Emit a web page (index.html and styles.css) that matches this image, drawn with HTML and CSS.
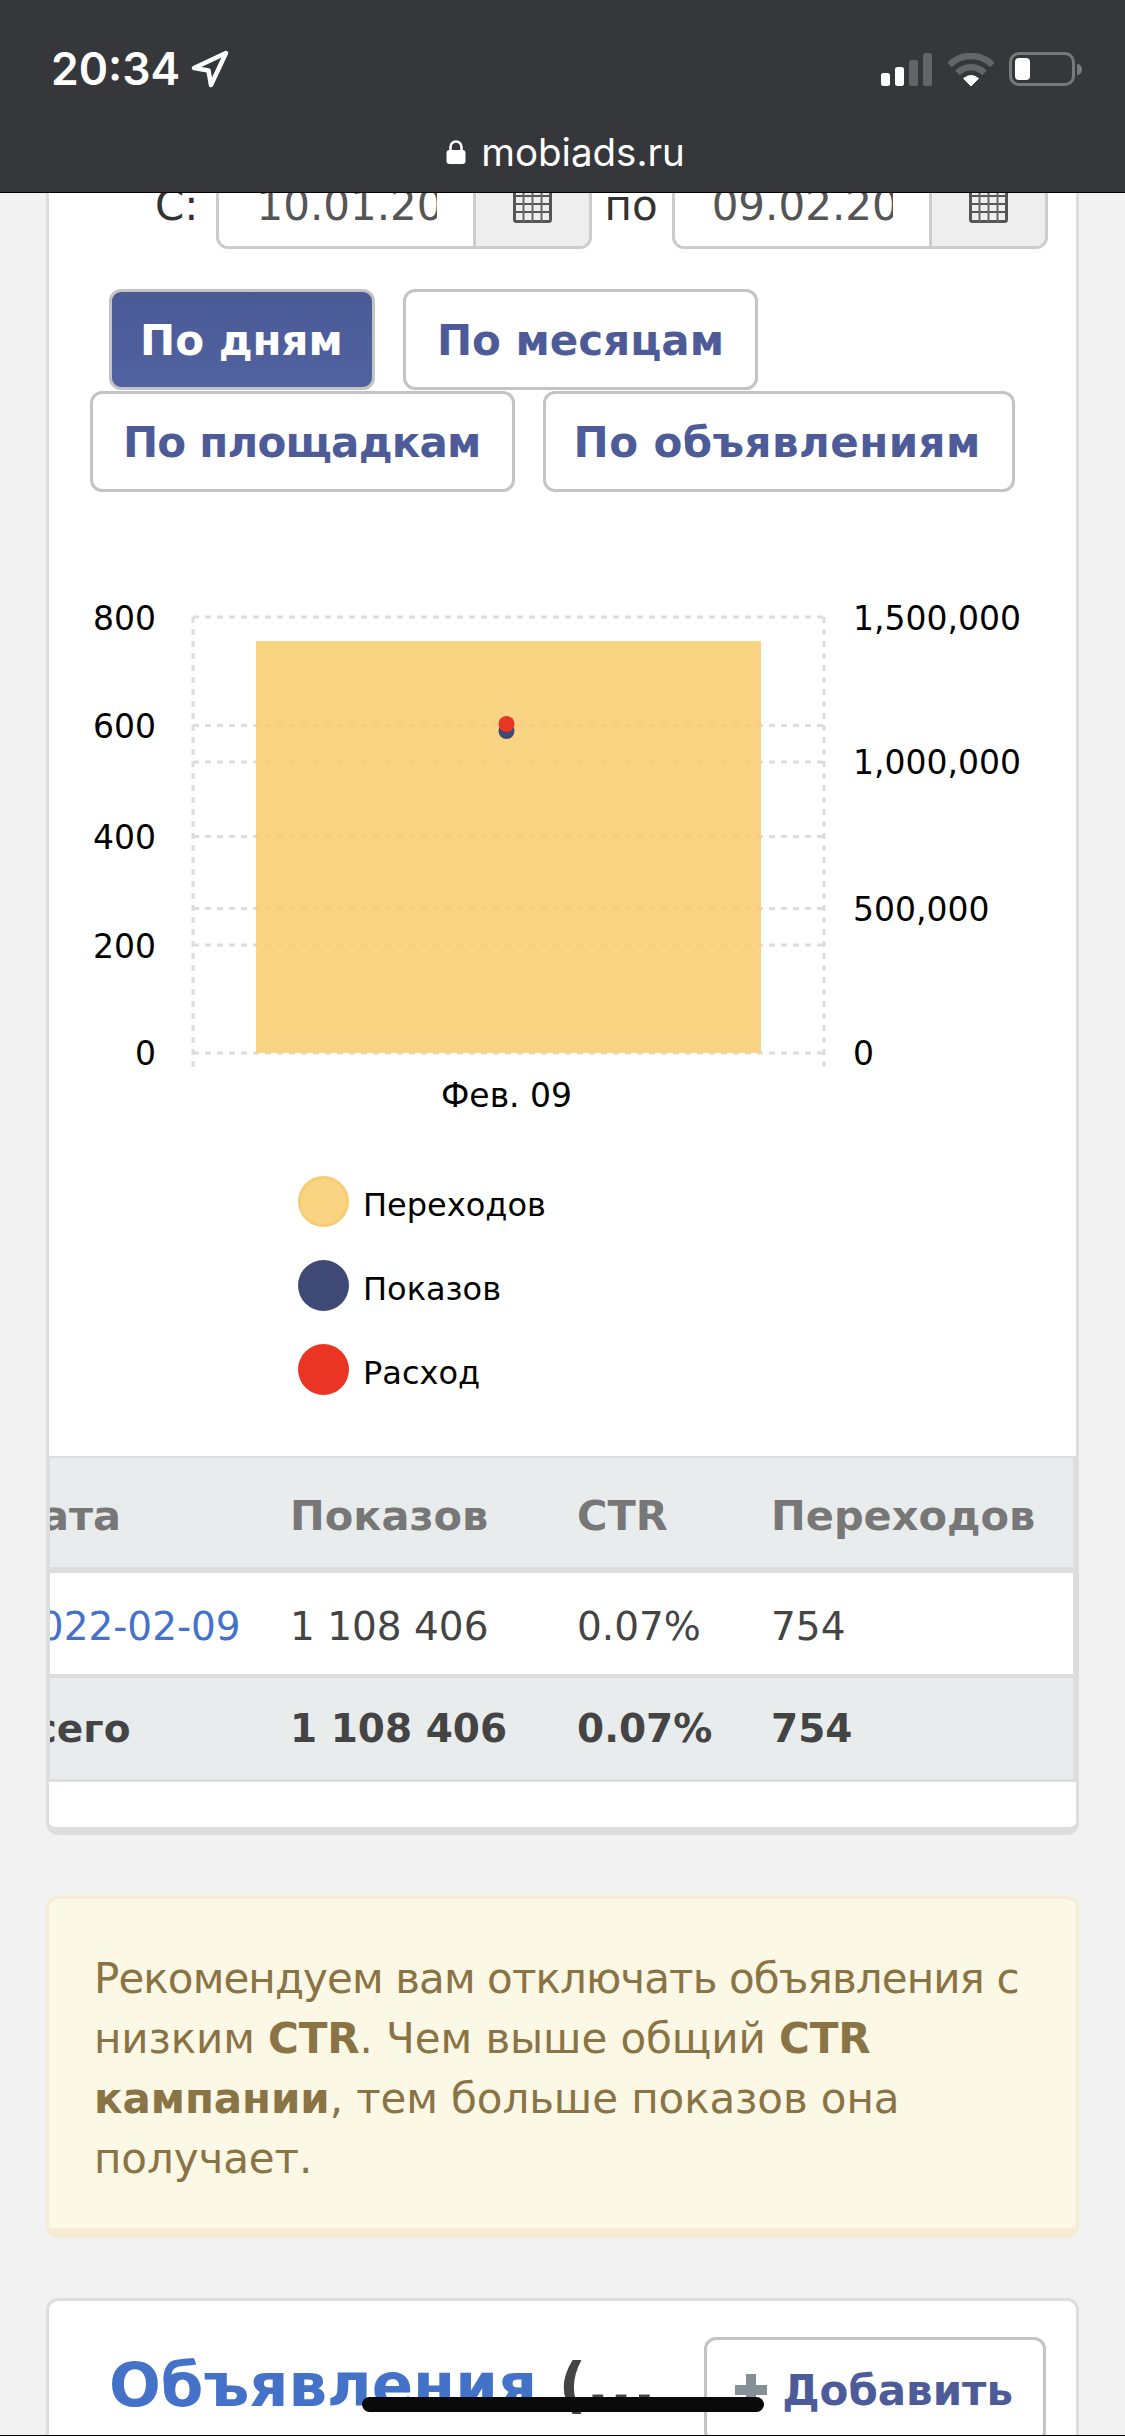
FILE: index.html
```html
<!DOCTYPE html>
<html lang="ru">
<head>
    <meta charset="UTF-8">
    <meta name="viewport" content="width=device-width, initial-scale=1.0">
    <title>mobiads.ru</title>
    <link rel="stylesheet" href="styles.css">
</head>
<body>
    <div class="page">
        <!-- status bar + address -->
        <header class="topbar">
            <div class="status">
                <div class="status-left">
                    <span class="time">20:34</span>
                    <svg class="arrow" width="38" height="38" viewBox="0 0 38 38">
                        <path d="M35 3 L3 18 L17.5 20.5 L20 35 Z" fill="none" stroke="#fff" stroke-width="4.5" stroke-linejoin="round"/>
                    </svg>
                </div>
                <div class="status-right">
                    <svg width="52" height="33" viewBox="0 0 52 33">
                        <rect x="0" y="20" width="9" height="13" rx="2.5" fill="#fff"/>
                        <rect x="14" y="14" width="9" height="19" rx="2.5" fill="#fff"/>
                        <rect x="28" y="7" width="9" height="26" rx="2.5" fill="#636568"/>
                        <rect x="42" y="0" width="9" height="33" rx="2.5" fill="#636568"/>
                    </svg>
                    <svg class="wifi" width="46" height="33" viewBox="0 0 46 33">
                        <path d="M1.5 12 A30 30 0 0 1 44.5 12" fill="none" stroke="#636568" stroke-width="6.5"/>
                        <path d="M9.5 20 A19 19 0 0 1 36.5 20" fill="none" stroke="#636568" stroke-width="6.5"/>
                        <path d="M23 33 L15.5 25.5 Q23 19.5 30.5 25.5 Z" fill="#fff" stroke="#fff" stroke-linejoin="round"/>
                    </svg>
                    <div class="battery"><div class="battery-fill"></div></div>
                    <div class="battery-tip"></div>
                </div>
            </div>
            <div class="address">
                <svg width="20" height="24" viewBox="0 0 20 24">
                    <path d="M4.5 11 V7 a5.5 5.5 0 0 1 11 0 V11" fill="none" stroke="#fff" stroke-width="2.6"/>
                    <rect x="0.5" y="10" width="19" height="14" rx="3" fill="#fff"/>
                </svg>
                <span>mobiads.ru</span>
            </div>
        </header>

        <main class="content">
            <section class="card stats">
                <div class="dates">
                    <label class="date-label">С:</label>
                    <div class="date-group">
                        <input class="date-input" type="text" value="10.01.2022">
                        <span class="date-addon">
                            <svg width="39" height="36" viewBox="0 0 39 36">
                                <rect x="1.5" y="1.5" width="36" height="33" rx="2" fill="#eee" stroke="#555" stroke-width="3"/>
                                <path d="M1 9h37M1 17h37M1 25h37" stroke="#555" stroke-width="2"/>
                                <path d="M10.5 1v34M19.5 1v34M28.5 1v34" stroke="#666" stroke-width="2"/>
                            </svg>
                        </span>
                    </div>
                    <label class="date-label date-label-to">по</label>
                    <div class="date-group">
                        <input class="date-input" type="text" value="09.02.2022">
                        <span class="date-addon">
                            <svg width="39" height="36" viewBox="0 0 39 36">
                                <rect x="1.5" y="1.5" width="36" height="33" rx="2" fill="#eee" stroke="#555" stroke-width="3"/>
                                <path d="M1 9h37M1 17h37M1 25h37" stroke="#555" stroke-width="2"/>
                                <path d="M10.5 1v34M19.5 1v34M28.5 1v34" stroke="#666" stroke-width="2"/>
                            </svg>
                        </span>
                    </div>
                </div>

                <div class="tabs">
                    <a class="btn btn-active tab-first">По дням</a>
                    <a class="btn">По месяцам</a>
                    <a class="btn tab-narrow">По площадкам</a>
                    <a class="btn tab-wide">По объявлениям</a>
                </div>

                <!-- chart, viewBox is in page coordinates -->
                <svg class="chart" width="1028" height="520" viewBox="49 600 1028 520">
                    <g class="grid">
                        <path d="M193 617H824M193 725.5H824M193 762H824M193 836.5H824M193 908.5H824M193 945H824M193 1053H824"/>
                        <path d="M193 617V1068M824 617V1068"/>
                    </g>
                    <rect x="256" y="641" width="505" height="412" fill="#f8ce6d" fill-opacity="0.85"/>
                    <circle cx="506.5" cy="731" r="8" fill="#3e4a75"/>
                    <circle cx="506.5" cy="724" r="8" fill="#ea3524"/>
                    <g class="axis">
                        <text x="156" y="630" text-anchor="end">800</text>
                        <text x="156" y="738" text-anchor="end">600</text>
                        <text x="156" y="849" text-anchor="end">400</text>
                        <text x="156" y="958" text-anchor="end">200</text>
                        <text x="156" y="1065" text-anchor="end">0</text>
                        <text x="853" y="630">1,500,000</text>
                        <text x="853" y="774">1,000,000</text>
                        <text x="853" y="921">500,000</text>
                        <text x="853" y="1065">0</text>
                        <text x="506.5" y="1107" text-anchor="middle">Фев. 09</text>
                    </g>
                </svg>

                <ul class="legend">
                    <li><span class="dot dot-clicks"></span><span class="legend-text">Переходов</span></li>
                    <li><span class="dot dot-views"></span><span class="legend-text">Показов</span></li>
                    <li><span class="dot dot-cost"></span><span class="legend-text">Расход</span></li>
                </ul>

                <div class="table-wrap">
                    <table class="report">
                        <colgroup>
                            <col class="col-date">
                            <col class="col-views">
                            <col class="col-ctr">
                            <col class="col-clicks">
                        </colgroup>
                        <thead>
                            <tr>
                                <th>Дата</th>
                                <th>Показов</th>
                                <th>CTR</th>
                                <th>Переходов</th>
                            </tr>
                        </thead>
                        <tbody>
                            <tr>
                                <td><a href="#">2022-02-09</a></td>
                                <td>1 108 406</td>
                                <td>0.07%</td>
                                <td>754</td>
                            </tr>
                        </tbody>
                        <tfoot>
                            <tr>
                                <td>Всего</td>
                                <td>1 108 406</td>
                                <td>0.07%</td>
                                <td>754</td>
                            </tr>
                        </tfoot>
                    </table>
                </div>
            </section>

            <div class="notice">
                <span class="notice-first">Рекомендуем вам отключать объявления с</span> низким <b>CTR</b>. Чем выше общий <b>CTR кампании</b>, тем больше показов она получает.
            </div>

            <section class="card ads">
                <h2 class="ads-title"><a href="#">Объявления</a> (...</h2>
                <a class="btn btn-add">
                    <svg class="plus" width="32" height="32" viewBox="0 0 32 32">
                        <path d="M16 0V32M0 16H32" stroke="#868e96" stroke-width="10"/>
                    </svg>
                    Добавить
                </a>
            </section>
        </main>

        <div class="home-bar"></div>
    </div>
</body>
</html>
```

FILE: styles.css
```css
body {
    margin: 0;
    background-color: #f2f2f2;
    font-family: "DejaVu Sans", sans-serif;
}
.page {
    position: relative;
    height: 2436px;
    box-sizing: border-box;
    border-bottom: 1px solid #000;
    overflow: hidden;
}

/* top bar */
.topbar {
    position: relative;
    z-index: 2;
    height: 192px;
    background-color: #36373b;
    border-bottom: 1px solid #000;
    color: #fff;
    font-family: "Inter", sans-serif;
}
.status {
    display: flex;
    justify-content: space-between;
    align-items: center;
    padding: 52px 43px 0 51px;
    height: 34px;
}
.status-left {
    display: flex;
    align-items: center;
}
.time {
    font-size: 44.5px;
    font-weight: 600;
    line-height: 34px;
}
.arrow {
    margin-left: 11px;
}
.status-right {
    display: flex;
    align-items: center;
}
.wifi {
    margin-left: 15px;
}
.battery {
    margin-left: 15px;
    box-sizing: border-box;
    width: 66px;
    height: 34px;
    border: 3px solid #77797b;
    border-radius: 10px;
    padding: 3px;
}
.battery-fill {
    width: 15px;
    height: 22px;
    background-color: #fff;
    border-radius: 4px;
}
.battery-tip {
    width: 5px;
    height: 11px;
    margin-left: 2px;
    background-color: #77797b;
    border-radius: 0 5px 5px 0;
}
.address {
    display: flex;
    justify-content: center;
    align-items: center;
    gap: 15px;
    margin-top: 46px;
    padding-left: 6px;
    font-size: 38.5px;
    line-height: 40px;
}

/* cards */
.content {
    padding: 0 46px;
    margin-top: -43px;
}
.card {
    background-color: #fff;
    border: 3px solid #ddd;
    border-radius: 12px;
}
.stats {
    border-top: 0;
    border-bottom-width: 8px;
    padding: 11px 0 45px;
}
.dates {
    display: flex;
    align-items: center;
    padding-left: 106px;
    font-size: 42px;
    color: #333;
}
.date-label {
    margin-right: 18px;
}
.date-label-to {
    margin: 0 14px 0 12px;
}
.date-group {
    display: flex;
    height: 88px;
    box-sizing: border-box;
    border: 3px solid #ccc;
    border-radius: 12px;
    overflow: hidden;
}
.date-input {
    width: 254px;
    box-sizing: border-box;
    border: 0;
    padding: 0 36px 0 37px;
    font-family: inherit;
    font-size: 42px;
    color: #555;
    background: #fff;
}
.date-addon {
    display: flex;
    align-items: center;
    justify-content: center;
    width: 113px;
    background-color: #eee;
    border-left: 3px solid #ccc;
}

/* buttons */
.btn {
    display: inline-block;
    box-sizing: border-box;
    height: 101px;
    padding: 0 31px;
    border: 3px solid #c4c4c4;
    border-radius: 12px;
    background-color: #fff;
    color: #4d5c99;
    font-size: 42px;
    font-weight: bold;
    line-height: 97px;
    white-space: nowrap;
}
.btn-active {
    padding: 0 29px 0 28px;
    color: #fff;
    background: linear-gradient(#4a5a95, #5062a0);
}
.tabs {
    display: flex;
    flex-wrap: wrap;
    column-gap: 28px;
    row-gap: 1px;
    margin-top: 40px;
    padding-left: 41px;
}
.tab-first {
    margin-left: 19px;
}
.tab-narrow {
    padding-left: 30px;
    letter-spacing: -0.8px;
}
.tab-wide {
    padding-left: 28px;
    letter-spacing: 0.45px;
}

/* chart */
.chart {
    display: block;
    margin-top: 108px;
}
.grid path {
    fill: none;
    stroke: #ddd;
    stroke-width: 3;
    stroke-dasharray: 6 6;
}
.axis text {
    font-family: "DejaVu Sans", sans-serif;
    font-size: 33px;
    fill: #000;
}
.legend {
    list-style: none;
    margin: 56px 0 61px;
    padding: 0 0 0 249px;
    display: flex;
    flex-direction: column;
    gap: 33px;
    font-size: 32px;
    color: #000;
}
.legend li {
    display: flex;
    align-items: center;
    height: 51px;
}
.legend-text {
    margin-top: 6px;
}
.dot {
    box-sizing: border-box;
    width: 51px;
    height: 51px;
    margin-right: 14px;
    border-radius: 50%;
}
.dot-clicks {
    background-color: #f9d583;
    border: 3px solid #f6cd73;
}
.dot-views {
    background-color: #3e4a75;
}
.dot-cost {
    background-color: #ea3524;
}

/* table */
.table-wrap {
    overflow: hidden;
    border-top: 2px solid #ddd;
    border-left: 1px solid #ddd;
    border-right: 3px solid #ddd;
}
.report {
    table-layout: fixed;
    width: 1089px;
    margin-left: -66px;
    border-collapse: separate;
    border-spacing: 0;
    font-size: 39px;
    color: #444;
}
.col-date { width: 280px; }
.col-views { width: 287px; }
.col-ctr { width: 194px; }
.col-clicks { width: 328px; }
.report th,
.report td {
    padding: 0 0 0 26px;
    text-align: left;
    white-space: nowrap;
}
.report th {
    height: 115px;
    padding-top: 5px;
    box-sizing: border-box;
    background-color: #e9ecec;
    border-bottom: 6px solid #ddd;
    color: #777;
    font-size: 41.5px;
}
.report tbody td {
    height: 105px;
    padding-top: 5px;
    box-sizing: border-box;
    border-bottom: 4px solid #ddd;
}
.report tbody a {
    margin-left: 4px;
    color: #4472c8;
    text-decoration: none;
}
.report tfoot td {
    height: 104px;
    box-sizing: border-box;
    background-color: #e9ecec;
    border-bottom: 3px solid #ddd;
    font-weight: bold;
}
.report th:first-child,
.report tfoot td:first-child {
    padding-left: 20px;
}

/* notice */
.notice {
    margin-top: 61px;
    padding: 50px 46px 39px 45px;
    background-color: #fbf8e6;
    border: 3px solid #f6ecd3;
    border-bottom-width: 10px;
    border-radius: 12px;
    color: #8a7344;
    font-size: 42px;
    line-height: 60px;
    letter-spacing: -0.1px;
}
.notice-first {
    letter-spacing: -0.9px;
}

/* ads */
.ads {
    display: flex;
    justify-content: space-between;
    align-items: flex-start;
    margin-top: 60px;
    height: 300px;
    padding: 36px 30px 0 60px;
}
.ads-title {
    margin: 0;
    font-size: 61px;
    line-height: 96px;
    color: #444;
    white-space: nowrap;
}
.ads-title a {
    color: #4472c8;
    text-decoration: none;
}
.btn-add {
    display: flex;
    align-items: center;
    gap: 15px;
    padding: 0 30px 0 28px;
    height: 106px;
}
.plus {
    flex: none;
}

.home-bar {
    position: absolute;
    left: 362px;
    top: 2397px;
    width: 402px;
    height: 15px;
    background-color: #0a0a0a;
    border-radius: 8px;
}
```
